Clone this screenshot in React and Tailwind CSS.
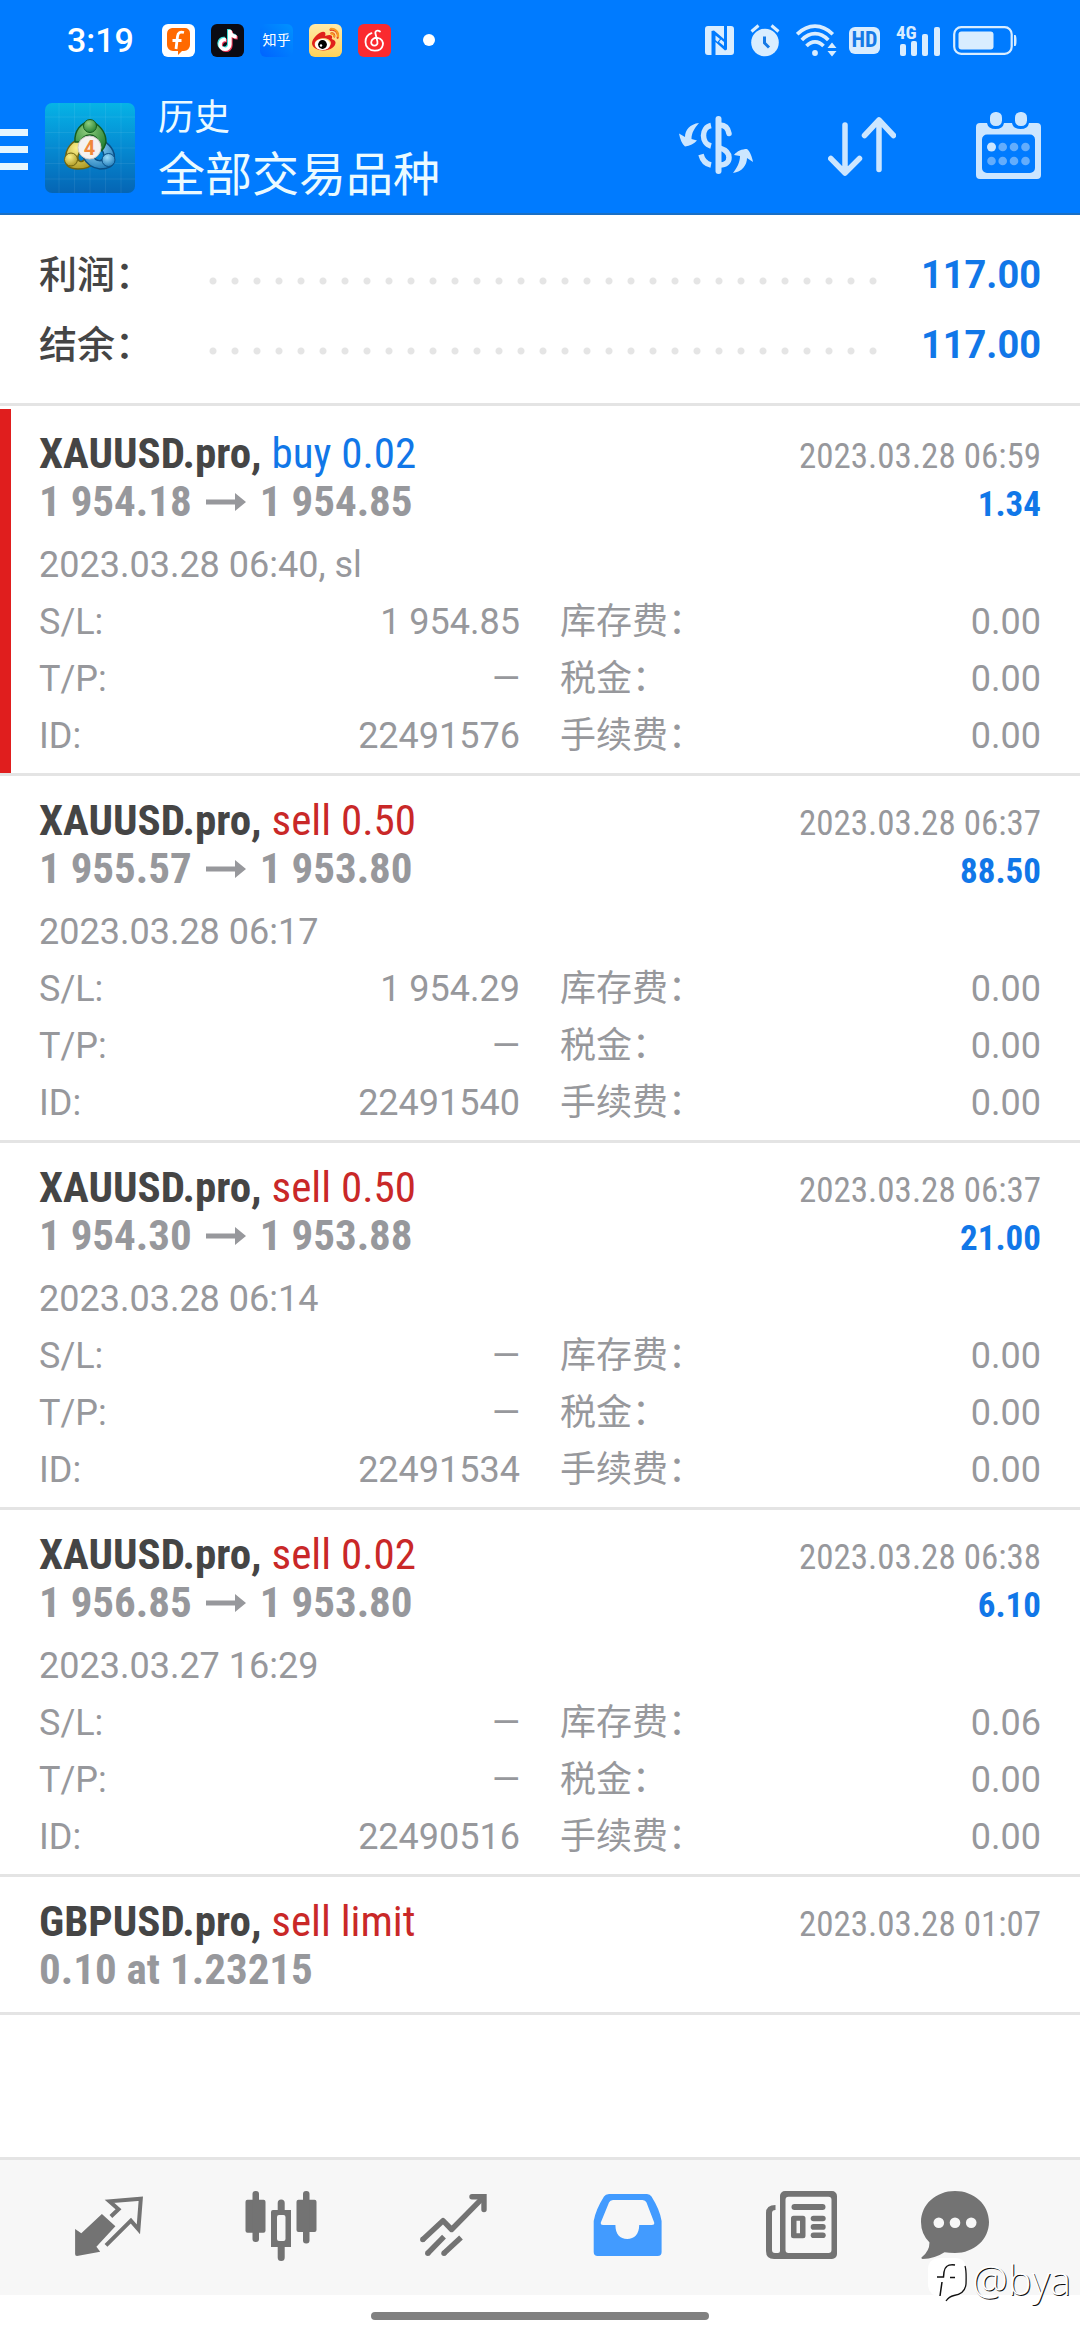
import { FaTiktok, FaWeibo } from 'react-icons/fa';

const trades = [
  {
    id: '22491576',
    symbol: 'XAUUSD.pro',
    side: 'buy',
    volume: '0.02',
    open: '1 954.18',
    close: '1 954.85',
    closedAt: '2023.03.28 06:59',
    openedAt: '2023.03.28 06:40, sl',
    profit: '1.34',
    sl: '1 954.85',
    tp: '—',
    swap: '0.00',
    stopped: true
  },
  {
    id: '22491540',
    symbol: 'XAUUSD.pro',
    side: 'sell',
    volume: '0.50',
    open: '1 955.57',
    close: '1 953.80',
    closedAt: '2023.03.28 06:37',
    openedAt: '2023.03.28 06:17',
    profit: '88.50',
    sl: '1 954.29',
    tp: '—',
    swap: '0.00'
  },
  {
    id: '22491534',
    symbol: 'XAUUSD.pro',
    side: 'sell',
    volume: '0.50',
    open: '1 954.30',
    close: '1 953.88',
    closedAt: '2023.03.28 06:37',
    openedAt: '2023.03.28 06:14',
    profit: '21.00',
    sl: '—',
    tp: '—',
    swap: '0.00'
  },
  {
    id: '22490516',
    symbol: 'XAUUSD.pro',
    side: 'sell',
    volume: '0.02',
    open: '1 956.85',
    close: '1 953.80',
    closedAt: '2023.03.28 06:38',
    openedAt: '2023.03.27 16:29',
    profit: '6.10',
    sl: '—',
    tp: '—',
    swap: '0.06'
  }
];

const FeedLogo = () => (
  <svg viewBox="0 0 33 33" className="size-[33px]">
    <rect width="33" height="33" rx="6" fill="#fff" />
    <path d="M10 4h13a5 5 0 0 1 5 5v12a6 6 0 0 1-6 6h-2l-4 4v-4h-5a6 6 0 0 1-6-6V10a6 6 0 0 1 5-6Z" fill="#ff6a00" />
    <path d="M22 8.500c-4-1-6 0-6.500 4L14 25M10.500 16.500h9" fill="none" stroke="#fff" strokeWidth="2.800" />
  </svg>
);

const TiktokLogo = () => (
  <span className="relative block size-[33px] rounded-md bg-[#0b0b14]">
    <FaTiktok className="absolute left-[5px] top-[5px] size-[21px] text-[#40e0dc]" />
    <FaTiktok className="absolute left-[7px] top-[7px] size-[21px] text-[#f03a5a]" />
    <FaTiktok className="absolute left-[6px] top-[6px] size-[21px] text-white" />
  </span>
);

const ZhihuLogo = () => (
  <span className="flex size-[33px] items-center justify-center rounded-md bg-linear-to-tr from-[#0062ff] to-[#0092ff] text-[14px] leading-none text-white">
    知乎
  </span>
);

const WeiboLogo = () => (
  <span className="relative block size-[33px] rounded-md bg-linear-to-b from-[#ffeaa8] to-[#ffd257]">
    <FaWeibo className="absolute left-[3px] top-[3px] size-[27px] text-[#e0201c]" />
    <svg viewBox="0 0 33 33" className="absolute inset-0">
      <ellipse cx="13.500" cy="20.500" rx="7.500" ry="5.500" fill="#fff" />
      <circle cx="13.500" cy="20.500" r="4.400" fill="#000" />
      <circle cx="12" cy="21.500" r="1.200" fill="#fff" />
      <path d="M21 5c5-1 9 3 8 8.500M21.500 9.500c2.500-.5 4 1.500 3.500 3.500" fill="none" stroke="#f59a23" strokeWidth="2" />
    </svg>
  </span>
);

const MusicLogo = () => (
  <svg viewBox="0 0 33 33" className="size-[33px]">
    <rect width="33" height="33" rx="6" fill="#fa2a2f" />
    <path
      d="M22 7.500c-2-1.600-5-1-4.600 1.800l2 8.200c.6 3-1.300 4.200-3 4.200-2 0-3.300-1.600-3.200-3.500.2-3.200 3.400-4.700 6.300-4.400 4.200.5 6 4 5.300 7.300-.8 3.700-4.300 5.600-8 5.600-5.600 0-9.300-3.700-9.300-8.800 0-4 2.300-7.300 6-8.700"
      fill="none"
      stroke="#fff"
      strokeWidth="1.800"
      strokeLinecap="round"
    />
  </svg>
);

const StatusBar = () => (
  <div className="flex h-20 items-center justify-between pl-[67px] pr-[63px] text-[#d9edff]">
    <div className="flex items-center">
      <span className="text-[34px] font-medium leading-10 text-white">3:19</span>
      <div className="ml-7 flex gap-4">
        <FeedLogo />
        <TiktokLogo />
        <ZhihuLogo />
        <WeiboLogo />
        <MusicLogo />
      </div>
      <span className="ml-8 size-3 rounded-full bg-white" />
    </div>
    <div className="flex items-center">
      {/* nfc */}
      <svg viewBox="0 0 29 29" className="size-[29px]">
        <path
          d="M3 0h16v13L9 4.500 6.500 5v24H3a3 3 0 0 1-3-3V3a3 3 0 0 1 3-3ZM22 0h4a3 3 0 0 1 3 3v23a3 3 0 0 1-3 3H10.500V16L20 24.500l2-1Z"
          fill="currentColor"
        />
        <path d="M10.500 9.500 15 13l-2.500 3-2-2ZM16 13.500l3 2.500v4l-5-4Z" fill="currentColor" />
      </svg>
      {/* alarm */}
      <svg viewBox="0 0 30 33" className="ml-4 h-[33px] w-[30px]">
        <circle cx="15" cy="18.500" r="13.800" fill="currentColor" />
        <path d="M1.500 7.500 8.500 1.500M28.500 7.500 21.500 1.500" stroke="currentColor" strokeWidth="3" />
        <path d="M14.500 12.500V19l4.500 4.500" fill="none" stroke="#1579e6" strokeWidth="3" />
      </svg>
      {/* wifi */}
      <svg viewBox="0 0 41 33" className="ml-4 h-[33px] w-[41px]">
        <path d="M1.200 10.200C12-.6 26-.6 36.800 10.200M5.800 16c8-8.500 18.500-8.500 26.500 0M10.500 22c5-5.500 12-5.500 17 0" fill="none" stroke="currentColor" strokeWidth="3.600" />
        <circle cx="19" cy="29" r="2.900" fill="currentColor" />
        <path d="m36 18.500 4.500 5.500h-9ZM36 32.500l4.500-5.500h-9Z" fill="currentColor" />
      </svg>
      <span className="ml-3 flex h-[27px] w-[31px] items-center justify-center rounded-md bg-[#d9edff] font-['Roboto_Condensed'] text-[22px] font-bold leading-none text-[#1579e6]">
        HD
      </span>
      {/* signal */}
      <div className="relative ml-4">
        <svg viewBox="0 0 45 33" className="h-[33px] w-[45px]" fill="currentColor">
          <rect x="4" y="20" width="6" height="12" rx="2" />
          <rect x="15" y="17" width="6" height="15" rx="2" />
          <rect x="26" y="10" width="6" height="22" rx="2" />
          <rect x="38" y="3" width="6" height="29" rx="2" />
        </svg>
        <span className="absolute -top-px left-0 font-['Roboto_Condensed'] text-[19px] font-bold leading-[20px]">4G</span>
      </div>
      {/* battery */}
      <svg viewBox="0 0 64 29" className="ml-3 h-[29px] w-[64px]">
        <rect x="1.200" y="1.200" width="57.500" height="26.600" rx="7" fill="none" stroke="currentColor" strokeWidth="2.200" />
        <rect x="5.500" y="5.500" width="35" height="18" rx="3" fill="currentColor" />
        <path d="M61 9h1.500q1 1 1 5.500t-1 5.500H61Z" fill="currentColor" />
      </svg>
    </div>
  </div>
);

const AppLogo = () => (
  <svg viewBox="0 0 90 90" className="size-[90px]">
    <defs>
      <linearGradient id="logoBg" x1="0" y1="0" x2="0" y2="1">
        <stop offset="0" stopColor="#06b3e6" />
        <stop offset=".5" stopColor="#058ad2" />
        <stop offset="1" stopColor="#0565b4" />
      </linearGradient>
      <radialGradient id="green" cx=".4" cy=".3" r=".8">
        <stop offset="0" stopColor="#8fce7e" />
        <stop offset="1" stopColor="#1c7a2c" />
      </radialGradient>
      <radialGradient id="gold" cx=".4" cy=".3" r=".8">
        <stop offset="0" stopColor="#fbf08a" />
        <stop offset="1" stopColor="#a8921a" />
      </radialGradient>
      <radialGradient id="blue" cx=".4" cy=".3" r=".8">
        <stop offset="0" stopColor="#9bdcfa" />
        <stop offset="1" stopColor="#1674b4" />
      </radialGradient>
    </defs>
    <rect width="90" height="90" rx="7" fill="url(#logoBg)" />
    <path d="M14 0v90M29.500 0v90M45 0v90M60.500 0v90M76 0v90M0 14h90M0 29.500h90M0 45h90M0 60.500h90M0 76h90" stroke="#fff" strokeOpacity=".07" />
    <g strokeLinejoin="round">
      <path d="M35 36c-8 2-15 10-14 19-2 6 2 11 12 11 7 0 13-2 15-6l-8-4c-3 4-8 3-7-3l3-8Z" fill="url(#gold)" stroke="#6d6310" strokeWidth="1.500" />
      <path d="M56 37c8 3 15 11 13 20 0 6-6 9-14 9-8-1-14-6-17-12l10-1c3 6 10 6 11 1 0-3-1-6-3-8Z" fill="url(#blue)" stroke="#0a4f86" strokeWidth="1.500" />
      <path d="M30 39c-1-11 6-20 15-20 9 1 16 10 16 20-1 4-2 7-5 9l-4-9c1-4-3-7-7-7-5 0-8 3-9 7Z" fill="url(#green)" stroke="#145c1f" strokeWidth="1.500" />
      <circle cx="45" cy="23" r="6.500" fill="url(#green)" stroke="#145c1f" />
      <circle cx="26" cy="56.500" r="6.500" fill="url(#gold)" stroke="#6d6310" />
      <circle cx="63.500" cy="57" r="6.500" fill="url(#blue)" stroke="#0a4f86" />
    </g>
    <circle cx="44.500" cy="44.500" r="11.500" fill="#f4f2f0" stroke="#cfcac6" />
    <text x="44.500" y="52" textAnchor="middle" fontSize="20" fontWeight="700" fill="#f0883a" fontFamily="Roboto">
      4
    </text>
  </svg>
);

const Header = () => (
  <header className="border-b-2 border-[#1a6fc4] bg-[#007bff]">
    <StatusBar />
    <div className="flex items-start pb-[5px] pr-[39px] pt-[14px]">
      <button type="button" aria-label="菜单" className="mt-[35px] flex w-7 flex-col gap-[10px]">
        <span className="h-[7px] bg-[#e6f6ff]" />
        <span className="h-[7px] bg-[#e6f6ff]" />
        <span className="h-[7px] bg-[#e6f6ff]" />
      </button>
      <div className="ml-[17px] mt-[9px]">
        <AppLogo />
      </div>
      <div className="ml-[23px] flex-1 text-[#ebfaff]">
        <p className="text-[36px] leading-[48px]">历史</p>
        <h1 className="text-[47px] font-normal leading-[66px]">全部交易品种</h1>
      </div>
      <div className="mt-[17px] flex text-[#cce6ff]">
        <button type="button" aria-label="货币">
          <svg viewBox="0 0 74 70" className="h-[70px] w-[74px]">
            <path d="M20 12c-9 1-14 7-14 14L0 22.500C1 28 3 33 6 35.500c5-1 9-2.500 12-6L12.500 28c0-6 3-11 7.500-16ZM54 62c9-1 14-8 14-15l6 4c-1-5-3-11-6-13-5 0-10 2-13 6l6 1c0 6-3 12-7 17Z" fill="currentColor" />
            <g fill="none" stroke="currentColor">
              <path d="M39.500 8v52" strokeWidth="6" strokeLinecap="round" />
              <path d="M41 14c5 0 8 3 9 8.500" strokeWidth="5.500" strokeLinecap="round" />
              <path d="M41 37c6 2 9 5 9 9.500S47 54 41 54" strokeWidth="5.500" />
              <path d="M32 14.500c-10 2-10 18 0 20.500M22 43.500c1.500 6 5 9.500 10 10.500" strokeWidth="5.500" />
            </g>
          </svg>
        </button>
        <button type="button" aria-label="排序" className="ml-[75px]">
          <svg viewBox="0 0 68 70" className="h-[70px] w-[68px]" fill="none" stroke="currentColor" strokeWidth="5.500" strokeLinecap="round" strokeLinejoin="round">
            <path d="M17 14v48M2.800 47.500 17 62l14.500-14.500" />
            <path d="M51 58.500V9M36.500 24.500 51 9l14.500 15.500" />
          </svg>
        </button>
        <button type="button" aria-label="日历" className="ml-20">
          <svg viewBox="0 0 65 70" className="h-[70px] w-[65px]">
            <path
              d="M4 12h7q1 6 8.500 6T28 12h8q1 6 8.500 6T53 12h8a4 4 0 0 1 4 4v48a4 4 0 0 1-4 4H4a4 4 0 0 1-4-4V16a4 4 0 0 1 4-4Zm7 11.500a5 5 0 0 0-5 5V57a5 5 0 0 0 5 5h43a5 5 0 0 0 5-5V28.500a5 5 0 0 0-5-5Z"
              fill="currentColor"
              fillRule="evenodd"
            />
            <rect x="14" y="1" width="12" height="14" rx="5.500" fill="currentColor" />
            <rect x="39" y="1" width="12" height="14" rx="5.500" fill="currentColor" />
            <circle cx="15.500" cy="36" r="4.500" fill="currentColor" />
            <g fill="#63adfc">
              <circle cx="26.700" cy="36" r="4.300" />
              <circle cx="38" cy="36" r="4.300" />
              <circle cx="49.500" cy="36" r="4.300" />
              <circle cx="15.500" cy="50" r="4.300" />
              <circle cx="26.700" cy="50" r="4.300" />
              <circle cx="38" cy="50" r="4.300" />
              <circle cx="49.500" cy="50" r="4.300" />
            </g>
          </svg>
        </button>
      </div>
    </div>
  </header>
);

const SummaryRow = ({ label, value }) => (
  <div className="flex items-center text-[38px] leading-[70px]">
    <dt className="font-medium text-[#454545]">{label}</dt>
    <span className="ml-[49px] mr-[36px] mt-3 h-[22px] flex-1 bg-[radial-gradient(circle,#e5e5e5_3px,transparent_4px)] bg-[length:22px_22px] bg-repeat-x" />
    <dd className="font-bold text-[#1177e8]">{value}</dd>
  </div>
);

const Detail = ({ label, value }) => (
  <div className="flex justify-between">
    <dt>{label}</dt>
    <dd>{value}</dd>
  </div>
);

const ItemHead = ({ symbol, action, buy, date, children, profit }) => (
  <div className="font-['Roboto_Condensed','Liberation_Sans_Narrow',sans-serif] text-[43px] leading-[48px]">
    <div className="flex items-baseline justify-between">
      <h2 className="font-bold text-[#454545]">
        {symbol}, <span className={buy ? 'font-normal text-[#1177e8]' : 'font-normal text-[#c92828]'}>{action}</span>
      </h2>
      <time className="text-[35px] leading-none">{date}</time>
    </div>
    <div className="flex items-baseline justify-between font-bold">
      <p>{children}</p>
      {profit && <span className="text-[35px] leading-none text-[#1177e8]">{profit}</span>}
    </div>
  </div>
);

const Trade = ({ trade }) => (
  <li className="border-b-3 border-[#e4e4e4]">
    <div className={`pb-2 pr-[39px] pt-5 ${trade.stopped ? 'border-l-11 border-[#e01e1e] pl-[28px]' : 'pl-[39px]'}`}>
      <ItemHead
        symbol={trade.symbol}
        action={`${trade.side} ${trade.volume}`}
        buy={trade.side === 'buy'}
        date={trade.closedAt}
        profit={trade.profit}
      >
        {trade.open}
        <svg viewBox="0 0 40 18" className="mx-[14px] inline h-[18px] w-10 align-[5px]" aria-label="→" fill="currentColor">
          <path d="M0 6.500h29V0l11 9-11 9v-6.500H0Z" />
        </svg>
        {trade.close}
      </ItemHead>
      <div className="mt-3 text-[36px] leading-[57px]">
        <p>{trade.openedAt}</p>
        <dl className="grid grid-cols-2 gap-x-10">
          <Detail label="S/L:" value={trade.sl} />
          <Detail label="库存费：" value={trade.swap} />
          <Detail label="T/P:" value={trade.tp} />
          <Detail label="税金：" value="0.00" />
          <Detail label="ID:" value={trade.id} />
          <Detail label="手续费：" value="0.00" />
        </dl>
      </div>
    </div>
  </li>
);

const tabs = [
  {
    label: '行情',
    icon: (
      <svg viewBox="0 0 72 72" className="size-[72px]">
        <path d="M3.100 39 9.300 43.300 29.900 24 43.400 36.300 24.400 56.700 28.200 61.700 5 66Q3 66 3.100 64Z" fill="currentColor" />
        <path d="M38.900 26.500 46.500 19.300 37.500 11.300 68.800 8.700 66.400 39.300 58.900 30.700 34 55.300" fill="none" stroke="currentColor" strokeWidth="4" />
      </svg>
    )
  },
  {
    label: '图表',
    icon: (
      <svg viewBox="0 0 72 72" className="size-[72px]" fill="currentColor">
        <rect x=".5" y="9.700" width="20" height="33" rx="2" />
        <rect x="7.500" y="1" width="6.500" height="51" rx="3" />
        <path d="M28 20h18v37H26V22q0-2 2-2Zm6 5q-2 0-2 2v22q0 2 2 2h4.500q2 0 2-2V27q0-2-2-2Z" fillRule="evenodd" />
        <path d="M32.700 20v-7a3.500 3.500 0 0 1 7 0v7ZM32.700 57v10.500a3.500 3.500 0 0 0 7 0V57Z" />
        <rect x="51.500" y="9.700" width="20" height="32.300" rx="2" />
        <rect x="58" y="1" width="6.500" height="52.500" rx="3" />
      </svg>
    )
  },
  {
    label: '交易',
    icon: (
      <svg viewBox="0 0 72 72" className="size-[72px]" fill="none" stroke="currentColor" strokeWidth="5.400">
        <path d="M4.600 49.700 25 30.700 33.600 39.500 66 6.700M9.500 63.500 26 46.700M25.700 63.500 43 47.500" strokeLinejoin="round" />
        <path d="M54 6.700H66V19.500" strokeLinecap="round" />
        <g fill="currentColor" stroke="none">
          <circle cx="4.800" cy="49.500" r="2.700" />
          <circle cx="9.800" cy="63.200" r="2.700" />
          <circle cx="26" cy="63.200" r="2.700" />
        </g>
      </svg>
    )
  },
  {
    label: '历史',
    active: true,
    icon: (
      <svg viewBox="0 0 72 72" className="size-[72px]">
        <path
          d="M17 4h38q3 0 4.500 2.500Q68 20 69.600 31V62a4 4 0 0 1-4 4H5.700a4 4 0 0 1-4-4V31Q3.500 20 12 6.500 13.500 4 17 4Zm4 6q-3 0-4 2.500L8.800 32.500Q8.500 35 11 35h12.400c0 9 4.600 14 11.800 14s12-5 12-14h12.500q3 0 2.500-2.500L54.500 12.500Q53.500 10 50.500 10Z"
          fill="currentColor"
          fillRule="evenodd"
        />
      </svg>
    )
  },
  {
    label: '新闻',
    icon: (
      <svg viewBox="0 0 72 72" className="size-[72px]" fill="currentColor">
        <path d="M20 1h47a5 5 0 0 1 5 5v58a5 5 0 0 1-5 5H9q-8 0-8-8V23q0-8 9.500-8v5Q7 20 7 23v37q0 3 3 3h3q2 0 2-2V6a5 5 0 0 1 5-5Zm3.500 5.700a3 3 0 0 0-3 3V60a3 3 0 0 0 3 3h40a3 3 0 0 0 3-3V9.700a3 3 0 0 0-3-3Z" fillRule="evenodd" />
        <rect x="26.500" y="14" width="34" height="6" rx="3" />
        <path d="M28.500 25.700h9.500a2.500 2.500 0 0 1 2.500 2.500v17.600a2.500 2.500 0 0 1-2.500 2.500h-9.500a2.500 2.500 0 0 1-2.500-2.500V28.200a2.500 2.500 0 0 1 2.500-2.500Zm3 5v12.600H35V30.700Z" fillRule="evenodd" />
        <rect x="45.700" y="25.700" width="15" height="5.600" rx="2.800" />
        <rect x="45.700" y="34.100" width="15" height="5.600" rx="2.800" />
        <rect x="45.700" y="42.500" width="15" height="5.600" rx="2.800" />
      </svg>
    )
  },
  {
    label: '邮箱',
    icon: (
      <svg viewBox="0 0 106 72" className="h-[72px] w-[106px]">
        <path d="M34 1C53 1 68 14.500 68 32S53 63 34 63q-6 0-10.500-.8Q14 68.500 1.500 69-.5 68.500 1 67 8.500 61 8.500 52.500 0 44 0 32C0 14.500 15 1 34 1Z" fill="currentColor" />
        <g fill="#f7f7f7">
          <circle cx="17.800" cy="32.700" r="5.300" />
          <circle cx="34" cy="32.700" r="5.300" />
          <circle cx="50.200" cy="32.700" r="5.300" />
        </g>
      </svg>
    )
  }
];

const TabBar = () => (
  <nav className="flex border-t-3 border-[#e4e4e4] bg-[#f7f7f7] pb-[33px] pl-[21px] pr-[19px] pt-[30px]">
    {tabs.map((tab) => (
      <button
        key={tab.label}
        type="button"
        aria-label={tab.label}
        className={`flex flex-1 basis-0 justify-center ${tab.active ? 'text-[#429bff]' : 'text-[#737373]'}`}
      >
        {tab.icon}
      </button>
    ))}
  </nav>
);

const Watermark = () => (
  <div className="absolute bottom-[36px] right-[9px] flex items-center gap-[5px]">
    <svg viewBox="0 0 39 44" className="h-[44px] w-[39px]">
      <path d="M12 0h15q11 0 11 12v13q0 11-10 13-7 0-10 5v-5h-6Q0 38 0 26V12Q0 0 12 0Z" fill="#fff" />
      <path d="M37 8q1.500 4 1 18-1 10-12 11.500-5 1-8 5.500" fill="none" stroke="#111" strokeWidth="1.300" />
      <path d="M27 7c-7-1-10 1-11 7l-.5 5H9M22 19.500h5M14 24l-2 14" fill="none" stroke="#111" strokeWidth="1.500" />
    </svg>
    <span className="font-['Open_Sans',sans-serif] text-[40px] font-light leading-[48px] text-white [text-shadow:1px_1px_0_#111]">@bya</span>
  </div>
);

const App = () => {
  return (
    <div className="relative flex min-h-screen flex-col bg-white font-['Roboto','Noto_Sans_CJK_SC',sans-serif] text-[#97989c]">
      <Header />
      <main className="flex-1">
        <dl className="border-b-3 border-[#e4e4e4] px-[39px] pb-[23px] pt-[25px]">
          <SummaryRow label="利润：" value="117.00" />
          <SummaryRow label="结余：" value="117.00" />
        </dl>
        <ul className="pt-[3px]">
          {trades.map((trade) => (
            <Trade key={trade.id} trade={trade} />
          ))}
          <li className="border-b-3 border-[#e4e4e4] px-[39px] pb-[19px] pt-5">
            <ItemHead symbol="GBPUSD.pro" action="sell limit" date="2023.03.28 01:07">
              0.10 at 1.23215
            </ItemHead>
          </li>
        </ul>
      </main>
      <TabBar />
      <div className="flex h-[45px] justify-center pt-[17px]">
        <span className="h-2 w-[338px] rounded-full bg-[#808080]" />
      </div>
      <Watermark />
    </div>
  );
};

export default App;
